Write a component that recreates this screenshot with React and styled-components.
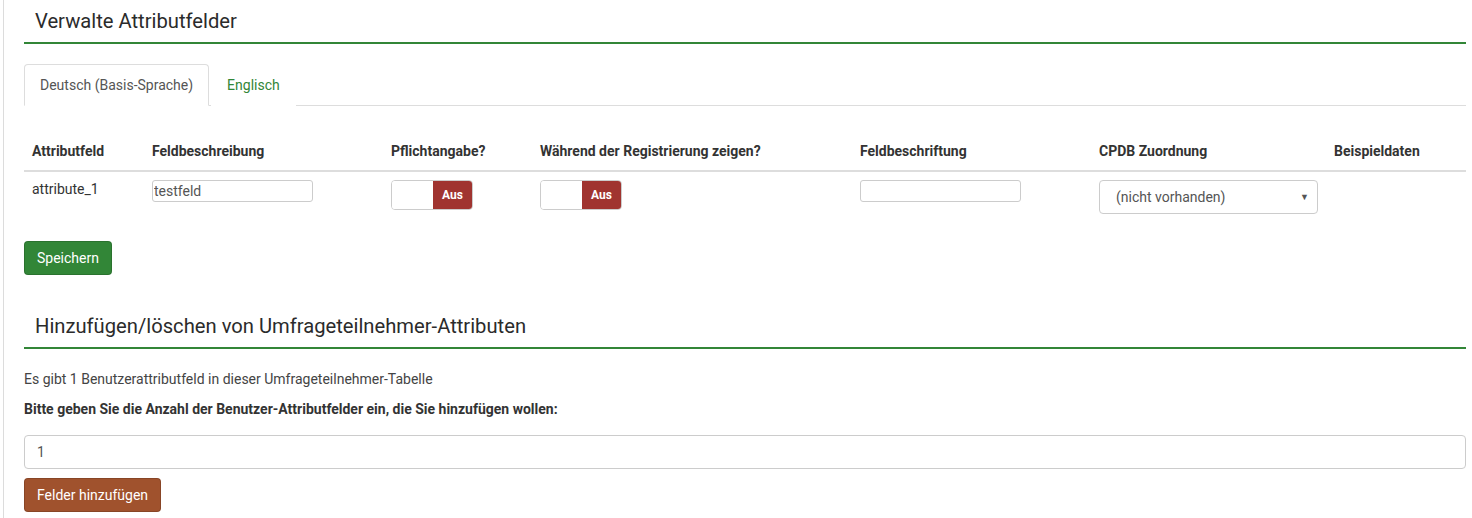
import React from 'react';
import styled, { createGlobalStyle } from 'styled-components';

const GlobalStyle = createGlobalStyle`
  html, body {
    margin: 0;
    padding: 0;
    background: #fff;
    font-family: Roboto, "Liberation Sans", sans-serif;
    font-size: 14px;
    color: #333;
  }
  * { box-sizing: border-box; }
`;

const columns = [
    {title: 'Attributfeld', width: 120},
    {title: 'Feldbeschreibung', width: 239},
    {title: 'Pflichtangabe?', width: 149},
    {title: 'Während der Registrierung zeigen?', width: 320},
    {title: 'Feldbeschriftung', width: 239},
    {title: 'CPDB Zuordnung', width: 235},
    {title: 'Beispieldaten', width: 140},
];

function Toggle({label}) {
    return (
        <ToggleBox>
            <ToggleHandle/>
            <ToggleLabel>{label}</ToggleLabel>
        </ToggleBox>
    );
}

function App() {
    return (
        <Page>
            <GlobalStyle/>
            <Heading>Verwalte Attributfelder</Heading>

            <Tabs>
                <Tab active>Deutsch (Basis-Sprache)</Tab>
                <Tab>Englisch</Tab>
            </Tabs>

            <Table>
                <colgroup>
                    {columns.map(c => <col key={c.title} style={{width: c.width}}/>)}
                </colgroup>
                <thead>
                <tr>
                    {columns.map(c => <Th key={c.title}>{c.title}</Th>)}
                </tr>
                </thead>
                <tbody>
                <tr>
                    <Td>attribute_1</Td>
                    <Td><SmallInput defaultValue="testfeld"/></Td>
                    <Td><Toggle label="Aus"/></Td>
                    <Td><Toggle label="Aus"/></Td>
                    <Td><SmallInput defaultValue=""/></Td>
                    <Td>
                        <Select>
                            <span>(nicht vorhanden)</span>
                            <Caret>▼</Caret>
                        </Select>
                    </Td>
                    <Td></Td>
                </tr>
                </tbody>
            </Table>

            <Button color="#328637">Speichern</Button>

            <Heading second>Hinzufügen/löschen von Umfrageteilnehmer-Attributen</Heading>
            <Info>Es gibt 1 Benutzerattributfeld in dieser Umfrageteilnehmer-Tabelle</Info>
            <Label>Bitte geben Sie die Anzahl der Benutzer-Attributfelder ein, die Sie hinzufügen wollen:</Label>
            <WideInput defaultValue="1"/>
            <Button color="#a0522d" top={9}>Felder hinzufügen</Button>
        </Page>
    );
}

export default App;

const Page = styled.div`
  margin-left: 3px;
  border-left: 1px solid #dcdcdc;
  padding: 0 6px 6px 20px;
  min-height: 518px;
`;

const Heading = styled.h3`
  margin: ${p => p.second ? '30px' : '0'} 0 0 0;
  padding: 8px 0 7px 11px;
  font-size: 20.2px;
  font-weight: 400;
  line-height: 27px;
  color: #2b2b2b;
  border-bottom: 2px solid #328637;
`;

const Tabs = styled.div`
  display: flex;
  margin-top: 20px;
  border-bottom: 1px solid #ddd;
`;

const Tab = styled.div`
  padding: 10px 15px;
  margin-right: 2px;
  margin-bottom: -1px;
  line-height: 20px;
  font-size: 14px;
  border: 1px solid ${p => p.active ? '#ddd' : 'transparent'};
  border-bottom-color: ${p => p.active ? '#fff' : 'transparent'};
  border-radius: 4px 4px 0 0;
  background: #fff;
  color: ${p => p.active ? '#555' : '#328637'};
`;

const Table = styled.table`
  width: 100%;
  table-layout: fixed;
  border-collapse: collapse;
  margin-top: 27px;
  margin-bottom: 19px;
`;

const Th = styled.th`
  text-align: left;
  padding: 8px 8px 9px;
  line-height: 20px;
  font-weight: 700;
  font-size: 14px;
  color: #333;
  border-bottom: 2px solid #ddd;
  white-space: nowrap;
`;

const Td = styled.td`
  padding: 7px 8px 8px;
  line-height: 20px;
  vertical-align: top;
  color: #333;
`;

const SmallInput = styled.input`
  display: block;
  width: 161px;
  height: 22px;
  margin-top: 1px;
  padding: 0 1px;
  border: 1px solid #ccc;
  border-radius: 3px;
  font-family: Roboto, "Liberation Sans", sans-serif;
  font-size: 14px;
  color: #555;
  outline: none;
`;

const ToggleBox = styled.div`
  display: flex;
  width: 82px;
  height: 30px;
  margin-top: 1px;
  border: 1px solid #ccc;
  border-radius: 4px;
  overflow: hidden;
`;

const ToggleHandle = styled.div`
  width: 41px;
  background: #fff;
`;

const ToggleLabel = styled.div`
  flex: 1;
  display: flex;
  align-items: center;
  justify-content: center;
  background: #a03430;
  color: #fff;
  font-size: 12px;
  font-weight: 700;
`;

const Select = styled.div`
  display: flex;
  align-items: center;
  justify-content: space-between;
  width: 219px;
  height: 34px;
  margin-top: 1px;
  padding: 0 8px 0 16px;
  border: 1px solid #ccc;
  border-radius: 4px;
  font-size: 14px;
  color: #555;
`;

const Caret = styled.span`
  font-size: 9px;
  color: #555;
`;

const Button = styled.button`
  display: block;
  margin-top: ${p => p.top || 0}px;
  height: 34px;
  padding: 6px 12px;
  border: 1px solid rgba(0, 0, 0, 0.15);
  border-radius: 4px;
  background: ${p => p.color};
  color: #fff;
  font-family: Roboto, "Liberation Sans", sans-serif;
  font-size: 14px;
  line-height: 20px;
`;

const Info = styled.p`
  margin: 20px 0 0 0;
  line-height: 20px;
  font-size: 14px;
  color: #444;
`;

const Label = styled.p`
  margin: 10px 0 0 0;
  line-height: 20px;
  font-size: 14px;
  font-weight: 700;
  color: #333;
`;

const WideInput = styled.input`
  display: block;
  width: 100%;
  height: 34px;
  margin-top: 16px;
  padding: 6px 12px;
  border: 1px solid #ccc;
  border-radius: 4px;
  font-family: Roboto, "Liberation Sans", sans-serif;
  font-size: 14px;
  color: #555;
  outline: none;
`;
